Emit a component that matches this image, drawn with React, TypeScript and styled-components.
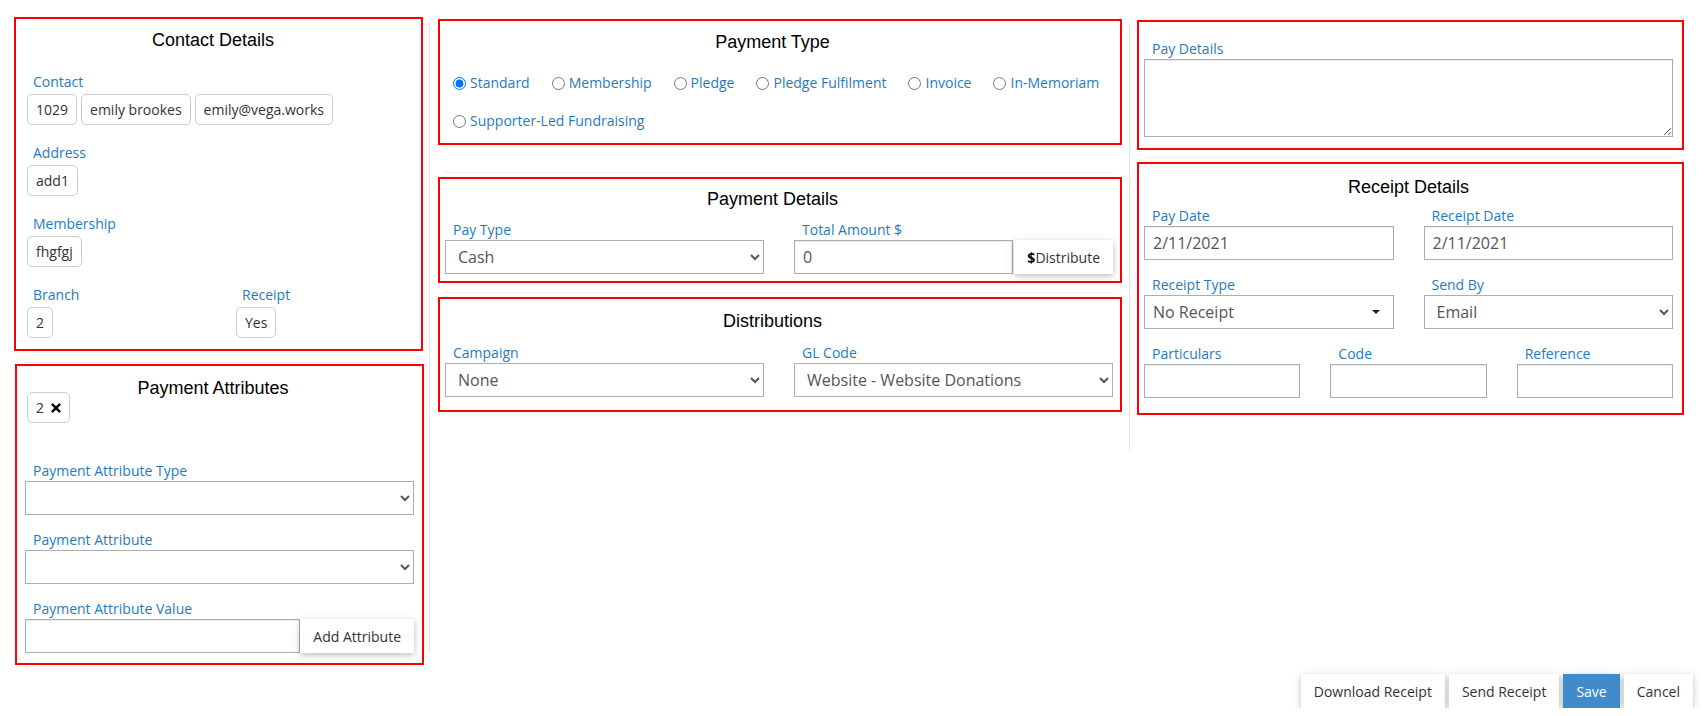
import React from "react";
import styled, { createGlobalStyle, css } from "styled-components";

const GlobalStyle = createGlobalStyle`
  * {
    box-sizing: border-box;
  }

  body {
    margin: 0;
    background: #fff;
    font-family: "Open Sans", "Liberation Sans", sans-serif;
    font-size: 14px;
    color: #333;
  }
`;

const Page = styled.div`
  width: 1708px;
`;

const Columns = styled.div`
  display: flex;
  align-items: flex-start;
`;

const Column = styled.div<{
  $width: number;
  $top: number;
  $bottom?: number;
  $divider?: boolean;
  $lineBottom?: number;
}>`
  position: relative;
  width: ${(p) => p.$width}px;
  padding-top: ${(p) => p.$top}px;
  padding-bottom: ${(p) => p.$bottom ?? 0}px;

  ${(p) =>
    p.$divider &&
    css`
      &::after {
        content: "";
        position: absolute;
        top: 24px;
        bottom: ${p.$lineBottom ?? 0}px;
        right: 0;
        width: 1px;
        background: #e6e6e6;
      }
    `}
`;

const Section = styled.section<{ $left: number; $width: number; $pad: string }>`
  margin-left: ${(p) => p.$left}px;
  width: ${(p) => p.$width}px;
  border: 2px solid #ff0000;
  padding: ${(p) => p.$pad};
`;

const Rule = styled.hr<{ $m: string; $w: number }>`
  margin: ${(p) => p.$m};
  width: ${(p) => p.$w}px;
  border: 0;
  border-top: 1px solid #eee;
`;

const Title = styled.h3<{ $gap: number; $shift?: number }>`
  margin: 0 0 ${(p) => p.$gap}px;
  padding-right: ${(p) => p.$shift ?? 0}px;
  font-family: "Liberation Sans", Arial, sans-serif;
  font-size: 18px;
  font-weight: normal;
  line-height: 22px;
  color: #000;
  text-align: center;
`;

const Label = styled.label`
  display: block;
  padding-left: 8px;
  font-size: 14px;
  line-height: 20px;
  color: #1f7bc0;
`;

const Field = styled.div<{ $gap?: number; $mt?: number }>`
  margin-top: ${(p) => p.$mt ?? 0}px;
  margin-bottom: ${(p) => p.$gap ?? 15}px;
`;

const Grid = styled.div<{ $cols: string; $gap?: number }>`
  display: grid;
  grid-template-columns: ${(p) => p.$cols};
  column-gap: ${(p) => p.$gap ?? 30}px;
`;

const ChipRow = styled.div<{ $mt?: number }>`
  display: flex;
  margin-top: ${(p) => p.$mt ?? 2}px;
`;

const Chip = styled.span`
  display: inline-flex;
  align-items: center;
  gap: 7px;
  height: 31px;
  margin: 0 2px;
  padding: 0 8px;
  border: 1px solid #ccc;
  border-radius: 5px;
  font-size: 14px;
  color: #333;
  white-space: nowrap;
`;

const controlBase = css`
  display: block;
  width: 100%;
  height: 34px;
  padding: 0 8px;
  border: 1px solid #adadad;
  border-radius: 0;
  background: #fff;
  font-family: "Open Sans", sans-serif;
  font-size: 16px;
  color: #555;
  outline: none;
`;

const TextInput = styled.input`
  ${controlBase}
  box-shadow: inset 0 1px 1px rgba(0, 0, 0, 0.075);
`;

const Select = styled.select`
  ${controlBase}
`;

const TextArea = styled.textarea`
  ${controlBase}
  height: 78px;
  resize: vertical;
  box-shadow: inset 0 1px 1px rgba(0, 0, 0, 0.075);
`;

const Dropdown = styled.div`
  ${controlBase}
  display: flex;
  align-items: center;
  justify-content: space-between;
  padding-right: 13px;
  cursor: pointer;
`;

const InputGroup = styled.div<{ $gap?: number }>`
  display: flex;
  gap: ${(p) => p.$gap ?? 0}px;

  ${TextInput} {
    flex: 1;
  }
`;

const RaisedButton = styled.button<{ $primary?: boolean }>`
  flex: none;
  height: 34px;
  padding: 0 13px;
  border: none;
  border-radius: 0;
  background: ${(p) => (p.$primary ? "#428bca" : "#fff")};
  color: ${(p) => (p.$primary ? "#fff" : "#333")};
  font-family: "Open Sans", sans-serif;
  font-size: 14px;
  white-space: nowrap;
  box-shadow: 0 2px 5px 0 rgba(0, 0, 0, 0.16), 0 2px 10px 0 rgba(0, 0, 0, 0.12);
  cursor: pointer;

  b {
    color: #000;
  }
`;

const RadioGroup = styled.div`
  display: flex;
  flex-wrap: wrap;
  column-gap: 22px;
  row-gap: 18px;
  padding-left: 8px;
`;

const RadioOption = styled.label`
  display: inline-flex;
  align-items: center;
  font-size: 14px;
  line-height: 20px;
  color: #1f7bc0;
  white-space: nowrap;

  input {
    width: 13px;
    height: 13px;
    margin: 0 4px 0 0;
  }
`;

const Actions = styled.div`
  display: flex;
  justify-content: flex-end;
  gap: 4px;
  margin-top: 9px;
  padding-right: 15px;
`;

const RemoveIcon = () => (
  <svg width="10" height="10" viewBox="0 0 10 10">
    <path
      d="M1.6 1.6l6.8 6.8M8.4 1.6l-6.8 6.8"
      stroke="#000"
      strokeWidth="2.4"
      strokeLinecap="round"
    />
  </svg>
);

const Caret = () => (
  <svg width="8" height="4" viewBox="0 0 8 4">
    <path d="M0 0h8L4 4z" fill="#222" />
  </svg>
);

const paymentTypes = [
  "Standard",
  "Membership",
  "Pledge",
  "Pledge Fulfilment",
  "Invoice",
  "In-Memoriam",
  "Supporter-Led Fundraising",
];

const App: React.FC = () => {
  return (
    <Page>
      <GlobalStyle />
      <Columns>
        <Column $width={430} $top={17} $divider $lineBottom={12}>
          <Section $left={14} $width={409} $pad="10px 7px 11px 9px">
            <Title $gap={21} $shift={13}>
              Contact Details
            </Title>
            <Field $gap={18}>
              <Label>Contact</Label>
              <ChipRow>
                <Chip>1029</Chip>
                <Chip>emily brookes</Chip>
                <Chip>emily@vega.works</Chip>
              </ChipRow>
            </Field>
            <Field $gap={18}>
              <Label>Address</Label>
              <ChipRow>
                <Chip>add1</Chip>
              </ChipRow>
            </Field>
            <Field $gap={18}>
              <Label>Membership</Label>
              <ChipRow>
                <Chip>fhgfgj</Chip>
              </ChipRow>
            </Field>
            <Grid $cols="209px 1fr" $gap={0}>
              <Field $gap={0}>
                <Label>Branch</Label>
                <ChipRow>
                  <Chip>2</Chip>
                </ChipRow>
              </Field>
              <Field $gap={0}>
                <Label>Receipt</Label>
                <ChipRow>
                  <Chip>Yes</Chip>
                </ChipRow>
              </Field>
            </Grid>
          </Section>

          <Rule $m="11px 0 1px 25px" $w={388} />

          <Section $left={15} $width={409} $pad="11px 8px 10px 8px">
            <Title $gap={0} $shift={13}>
              Payment Attributes
            </Title>
            <ChipRow $mt={-7}>
              <Chip>
                2 <RemoveIcon />
              </Chip>
            </ChipRow>
            <Field $mt={38}>
              <Label>Payment Attribute Type</Label>
              <Select defaultValue="">
                <option value=""></option>
              </Select>
            </Field>
            <Field>
              <Label>Payment Attribute</Label>
              <Select defaultValue="">
                <option value=""></option>
              </Select>
            </Field>
            <Field $gap={0}>
              <Label>Payment Attribute Value</Label>
              <InputGroup>
                <TextInput defaultValue="" />
                <RaisedButton>Add Attribute</RaisedButton>
              </InputGroup>
            </Field>
          </Section>
        </Column>

        <Column $width={700} $top={19} $bottom={38} $divider>
          <Section $left={8} $width={684} $pad="10px 7px 12px 5px">
            <Title $gap={20} $shift={13}>
              Payment Type
            </Title>
            <RadioGroup>
              {paymentTypes.map((type, i) => (
                <RadioOption key={type}>
                  <input type="radio" name="paymentType" defaultChecked={i === 0} />
                  {type}
                </RadioOption>
              ))}
            </RadioGroup>
          </Section>

          <Rule $m="27px 0 4px 15px" $w={668} />

          <Section $left={8} $width={684} $pad="9px 7px 7px 5px">
            <Title $gap={10} $shift={13}>
              Payment Details
            </Title>
            <Grid $cols="1fr 1fr">
              <Field $gap={0}>
                <Label>Pay Type</Label>
                <Select defaultValue="Cash">
                  <option>Cash</option>
                  <option>Cheque</option>
                  <option>Credit Card</option>
                </Select>
              </Field>
              <Field $gap={0}>
                <Label>Total Amount $</Label>
                <InputGroup $gap={1}>
                  <TextInput defaultValue="0" />
                  <RaisedButton>
                    <b>$</b>Distribute
                  </RaisedButton>
                </InputGroup>
              </Field>
            </Grid>
          </Section>

          <Rule $m="9px 0 4px 15px" $w={668} />

          <Section $left={8} $width={684} $pad="11px 7px 13px 5px">
            <Title $gap={11} $shift={13}>
              Distributions
            </Title>
            <Grid $cols="1fr 1fr">
              <Field $gap={0}>
                <Label>Campaign</Label>
                <Select defaultValue="None">
                  <option>None</option>
                </Select>
              </Field>
              <Field $gap={0}>
                <Label>GL Code</Label>
                <Select defaultValue="Website - Website Donations">
                  <option>Website - Website Donations</option>
                </Select>
              </Field>
            </Grid>
          </Section>
        </Column>

        <Column $width={578} $top={20}>
          <Section $left={7} $width={547} $pad="17px 9px 11px 5px">
            <Label>Pay Details</Label>
            <TextArea />
          </Section>

          <Rule $m="7px 0 4px 14px" $w={529} />

          <Section $left={7} $width={547} $pad="12px 9px 15px 5px">
            <Title $gap={8}>Receipt Details</Title>
            <Grid $cols="1fr 1fr">
              <Field>
                <Label>Pay Date</Label>
                <TextInput defaultValue="2/11/2021" />
              </Field>
              <Field>
                <Label>Receipt Date</Label>
                <TextInput defaultValue="2/11/2021" />
              </Field>
              <Field>
                <Label>Receipt Type</Label>
                <Dropdown>
                  No Receipt
                  <Caret />
                </Dropdown>
              </Field>
              <Field>
                <Label>Send By</Label>
                <Select defaultValue="Email">
                  <option>Email</option>
                  <option>Post</option>
                </Select>
              </Field>
            </Grid>
            <Grid $cols="1fr 1fr 1fr">
              <Field $gap={0}>
                <Label>Particulars</Label>
                <TextInput />
              </Field>
              <Field $gap={0}>
                <Label>Code</Label>
                <TextInput />
              </Field>
              <Field $gap={0}>
                <Label>Reference</Label>
                <TextInput />
              </Field>
            </Grid>
          </Section>
        </Column>
      </Columns>

      <Actions>
        <RaisedButton>Download Receipt</RaisedButton>
        <RaisedButton>Send Receipt</RaisedButton>
        <RaisedButton $primary>Save</RaisedButton>
        <RaisedButton>Cancel</RaisedButton>
      </Actions>
    </Page>
  );
};

export default App;
